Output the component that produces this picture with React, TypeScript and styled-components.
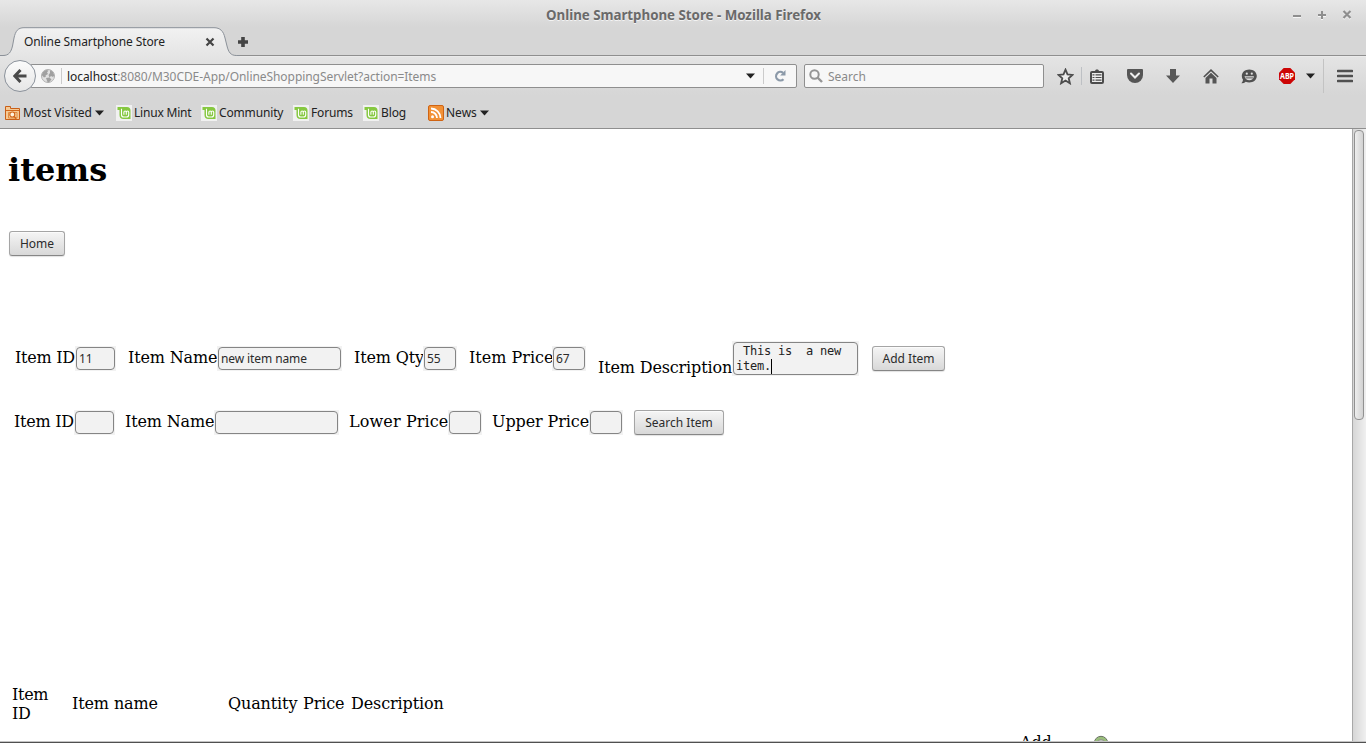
import React from "react";
import styled, { createGlobalStyle } from "styled-components";

const GlobalStyle = createGlobalStyle`
  * { box-sizing: border-box; }
  body { margin: 0; overflow: hidden; background: #fff; }
`;

const Window = styled.div`
  width: 1366px;
  height: 743px;
  display: flex;
  flex-direction: column;
  overflow: hidden;
  background: #fff;
  color: #222;
  font: 12px/16px "Noto Sans", "Open Sans", sans-serif;
  border-bottom: 1px solid #505050;
`;

const TitleBar = styled.div`
  height: 27px;
  flex: none;
  display: grid;
  grid-template-columns: 1fr auto 1fr;
  align-items: center;
  padding: 3px 13px 0 14px;
  background: linear-gradient(#e7e7e7, #d6d6d6);
`;

const WindowTitle = styled.div`
  grid-column: 2;
  font-size: 13.33px;
  font-weight: 700;
  line-height: 18px;
  letter-spacing: -0.02px;
  color: #6a6a6a;
  text-shadow: 0 1px #f3f3f3;
  white-space: nowrap;
`;

const WindowControls = styled.div`
  display: flex;
  justify-content: flex-end;
  gap: 13px;
  margin-top: -2px;
`;

const TabBar = styled.div`
  height: 29px;
  flex: none;
  display: flex;
  background: #d6d6d6;
  border-bottom: 1px solid #8f8f8f;
`;

const Tab = styled.div`
  position: relative;
  width: 236px;
  height: 29px;
  display: flex;
  align-items: center;
  justify-content: space-between;
  padding: 0 21px 0 24px;
`;

const TabShape = styled.svg`
  position: absolute;
  left: 0;
  top: 0;
`;

const TabTitle = styled.span`
  position: relative;
  letter-spacing: -0.1px;
  white-space: nowrap;
`;

const TabClose = styled.svg`
  position: relative;
`;

const NewTab = styled.div`
  width: 14px;
  display: flex;
  align-items: center;
  justify-content: center;
  padding-top: 1px;
`;

const NavBar = styled.div`
  height: 39px;
  flex: none;
  display: flex;
  align-items: center;
  padding-left: 4px;
  background: linear-gradient(#e4e4e4, #d6d6d6);
  border-top: 1px solid #eaeaea;
`;

const BackButton = styled.div`
  position: relative;
  z-index: 1;
  width: 32px;
  height: 32px;
  flex: none;
  border: 1px solid #8b929b;
  border-radius: 50%;
  background: linear-gradient(#fbfbfb, #e6e6e6);
  display: flex;
  align-items: center;
  justify-content: center;
`;

const Field = styled.div<{ $width: number }>`
  width: ${(p) => p.$width}px;
  height: 24px;
  flex: none;
  display: flex;
  align-items: center;
  border: 1px solid #8f8f8f;
  border-radius: 2px;
  background: #f7f7f7;
  color: #8a8a8a;
  white-space: nowrap;
`;

const UrlField = styled(Field)`
  margin-left: -6px;
  padding-left: 10px;
`;

const SearchField = styled(Field)`
  margin-left: 7px;
  padding-left: 4px;
  gap: 5px;
`;

const Host = styled.span`
  color: #222;
`;

const Url = styled.span`
  flex: 1;
  padding: 2px 0 0 5px;
  letter-spacing: -0.06px;
`;

const Placeholder = styled.span`
  padding-top: 2px;
`;

const Divider = styled.div<{ $height: number; $color?: string }>`
  width: 1px;
  flex: none;
  height: ${(p) => p.$height}px;
  background: ${(p) => p.$color ?? "#cbcbcb"};
`;

const Tool = styled.div<{ $width?: number; $left?: number }>`
  width: ${(p) => p.$width ?? 38}px;
  margin-left: ${(p) => p.$left ?? 0}px;
  flex: none;
  height: 24px;
  display: flex;
  align-items: center;
  justify-content: center;
`;

const BookmarksBar = styled.div`
  height: 34px;
  flex: none;
  display: flex;
  align-items: center;
  padding: 2px 4px 0;
  background: #d6d6d6;
  border-bottom: 1px solid #8f8f8f;
`;

const Bookmark = styled.div<{ $width: number; $tracking?: number }>`
  width: ${(p) => p.$width}px;
  height: 16px;
  flex: none;
  display: flex;
  align-items: center;
  letter-spacing: ${(p) => p.$tracking ?? 0}px;
  white-space: nowrap;
  > svg:first-child { margin-right: 2px; flex: none; }
  > svg:last-child:not(:first-child) { margin-left: 3px; flex: none; }
`;

const Viewport = styled.div`
  flex: 1;
  min-height: 0;
  display: flex;
  border-bottom: 1px solid #c4c4c4;
`;

const Page = styled.main`
  flex: 1;
  min-width: 0;
  overflow: hidden;
  color: #000;
  font: 16px/19px "DejaVu Serif", serif;
`;

const Heading = styled.h1`
  margin: 22px 0 0 8px;
  font-size: 32px;
  line-height: 38px;
  font-weight: 700;
`;

const Button = styled.button<{ $width: number }>`
  width: ${(p) => p.$width}px;
  height: 25px;
  flex: none;
  padding: 0;
  border: 1px solid #a5a5a5;
  border-bottom-color: #868686;
  border-radius: 3px;
  background: linear-gradient(#f5f5f5, #d8d8d8);
  box-shadow: 0 1px 1px #e2e2e2, inset 0 1px #fbfbfb;
  color: #2b2b2b;
  font: 12px/16px "Noto Sans", "Open Sans", sans-serif;
  white-space: nowrap;
`;

const HomeForm = styled.form`
  margin: 42px 0 0 9px;
`;

const FormRow = styled.form<{ $top: number; $left: number; $gap: number }>`
  margin: ${(p) => p.$top}px 0 0 ${(p) => p.$left}px;
  height: 37px;
  display: flex;
  align-items: center;
  gap: ${(p) => p.$gap}px;
  > button { margin-left: 1px; }
`;

const FieldGroup = styled.label<{ $labelWidth: number; $drop?: boolean; $tracking?: number }>`
  display: grid;
  grid-template-columns: ${(p) => p.$labelWidth}px auto;
  align-items: center;
  white-space: nowrap;
  > span:first-child {
    letter-spacing: ${(p) => p.$tracking ?? -0.15}px;
    padding-top: ${(p) => (p.$drop ? 18 : 0)}px;
    padding-bottom: ${(p) => (p.$drop ? 0 : 2)}px;
  }
`;

const InputFrame = styled.span`
  display: flex;
  padding: 1px;
  background: #f2f2f2;
`;

const TextInput = styled.input<{ $width: number }>`
  width: ${(p) => p.$width}px;
  height: 23px;
  padding: 0 2px;
  border: 1px solid #858585;
  border-radius: 4px;
  outline: none;
  background: #f2f2f2;
  color: #2b2b2b;
  font: 12px/16px "Noto Sans", "Open Sans", sans-serif;
  letter-spacing: -0.1px;
`;

const DescriptionBox = styled.div`
  width: 125px;
  height: 33px;
  padding: 1px 2px 0;
  border: 1px solid #858585;
  border-radius: 4px;
  background: #f2f2f2;
  color: #222;
  font: 12px/15px "DejaVu Sans Mono", monospace;
  letter-spacing: -0.22px;
  white-space: pre;
`;

const Caret = styled.span`
  display: inline-block;
  width: 1px;
  height: 15px;
  vertical-align: top;
  background: #000;
`;

const Table = styled.div`
  margin: 244px 0 0 12px;
  display: grid;
  grid-template-columns: 60px 156px 75px 48px 669px 73px 20px;
  grid-template-rows: 38px auto;
  row-gap: 9px;
  align-items: center;
  letter-spacing: -0.12px;
  white-space: nowrap;
`;

const NarrowCell = styled.div`
  width: 40px;
  letter-spacing: -0.3px;
  white-space: normal;
`;

const HeaderCell = styled.div`
  padding-bottom: 1px;
`;

const ActionCell = styled.div<{ $column: number; $top?: number }>`
  grid-column: ${(p) => p.$column};
  grid-row: 2;
  align-self: start;
  padding-top: ${(p) => p.$top ?? 0}px;
`;

const ScrollTrack = styled.div`
  width: 14px;
  flex: none;
  padding: 1px 2px 0 1px;
  border-left: 1px solid #a8a8a8;
  background: linear-gradient(90deg, #d6d6d6, #f0f0f0);
`;

const ScrollThumb = styled.div`
  width: 10px;
  height: 290px;
  border: 1px solid #929292;
  border-radius: 4px;
  background: linear-gradient(90deg, #eeeeee, #d2d2d2);
`;

const DownTriangle = () => (
  <svg width="9" height="6" viewBox="0 0 9 6">
    <path d="M0 .5h9L4.500 5.500z" fill="#222" />
  </svg>
);

const MintIcon = () => (
  <svg width="16" height="16" viewBox="0 0 16 16">
    <rect width="16" height="16" fill="#f1f1f1" />
    <path d="M1.500 2h9.500A3.500 3.500 0 0 1 14.500 5.500V14H7.500A4 4 0 0 1 3.500 10V5H1.500z" fill="#86c840" />
    <path d="M5.500 3.800v5.900q0 2.300 2.300 2.300h2.600q2.300 0 2.300-2.300V7.200q0-1.200-1.200-1.200T10.300 7.200V9.700M10.300 7.200Q10.300 6 9.100 6T7.900 7.200V9.700" fill="none" stroke="#fff" strokeWidth="1.1" />
  </svg>
);

const FolderIcon = () => (
  <svg width="16" height="16" viewBox="0 0 16 16">
    <path d="M1.500 14.500V1.500H6.500V3.500H15.500V14.500z" fill="#f5c995" stroke="#c95f17" />
    <path d="M2 5.500H15" stroke="#d1671b" />
    <path d="M4.500 13V7.500H13V13z" fill="#f5cf9c" stroke="#e08c42" />
    <circle cx="8.300" cy="9.500" r="2.500" fill="#fff3df" stroke="#d1671b" strokeWidth="1.200" />
    <path d="M10 11.300L12.200 13.700" stroke="#d1671b" strokeWidth="1.400" />
  </svg>
);

const FeedIcon = () => (
  <svg width="16" height="16" viewBox="0 0 16 16">
    <rect x=".5" y=".5" width="15" height="15" rx="1.500" fill="#f29136" stroke="#cf6414" />
    <circle cx="4.500" cy="11.700" r="1.500" fill="#fff" />
    <path d="M3 7A6 6 0 0 1 9 13M3 3.500A9.500 9.500 0 0 1 12.500 13" fill="none" stroke="#fff" strokeWidth="1.800" />
  </svg>
);

const BackArrow = () => (
  <svg width="14" height="14" viewBox="0 0 14 14">
    <path d="M7.500 1L1.800 7l5.700 6M2.500 7H13.500" fill="none" stroke="#4a4a4a" strokeWidth="3" />
  </svg>
);

const GlobeIcon = () => (
  <svg width="14" height="14" viewBox="0 0 14 14">
    <circle cx="7" cy="7" r="6.500" fill="#e0e0e0" stroke="#b0b0b0" />
    <path d="M.7 6L2 3 5 1 7.500 1.500 6 3.500 7 5 4.500 6.500 5 7.500 3 8.500zM9 1L12 3 13.300 6.500 12 8 10 7 8.500 8.500 7.500 6 9 4zM5 9L8.500 8.500 10.500 10.500 8 13.300 6.500 13z" fill="#a0a0a0" />
  </svg>
);

const App = () => (
  <>
    <GlobalStyle />
    <Window>
      <TitleBar>
        <WindowTitle>Online Smartphone Store - Mozilla Firefox</WindowTitle>
        <WindowControls>
          <svg width="12" height="12" viewBox="0 0 12 12"><path d="M2 9h8" stroke="#f6f6f6" strokeWidth="2" /><path d="M2 8h8" stroke="#8e8e8e" strokeWidth="2" /></svg>
          <svg width="12" height="12" viewBox="0 0 12 12"><path d="M2 8h8M6 4v8" stroke="#f6f6f6" strokeWidth="2" /><path d="M2 7h8M6 3v8" stroke="#8e8e8e" strokeWidth="2" /></svg>
          <svg width="12" height="12" viewBox="0 0 12 12"><path d="M2.500 4l7 7m0-7l-7 7" stroke="#f6f6f6" strokeWidth="2" /><path d="M2.500 3l7 7m0-7l-7 7" stroke="#8e8e8e" strokeWidth="2.200" /></svg>
        </WindowControls>
      </TitleBar>

      <TabBar>
        <Tab>
          <TabShape width="240" height="30" viewBox="0 0 240 30">
            <defs>
              <linearGradient id="tabFill" x1="0" y1="0" x2="0" y2="1">
                <stop offset="0" stopColor="#f2f2f2" />
                <stop offset="1" stopColor="#e4e4e4" />
              </linearGradient>
            </defs>
            <path d="M0 30V28.500H3C9 28.500 11 25 12.500 19L14 11C15.500 4 18 .7 24 .7H214C220 .7 223.500 4 225 11L227 19C228.500 25 230.500 28.500 236.500 28.500H240V30z" fill="url(#tabFill)" />
            <path d="M0 28.500H3C9 28.500 11 25 12.500 19L14 11C15.500 4 18 .7 24 .7H214C220 .7 223.500 4 225 11L227 19C228.500 25 230.500 28.500 236.500 28.500H240" fill="none" stroke="#8b9199" />
          </TabShape>
          <TabTitle>Online Smartphone Store</TabTitle>
          <TabClose width="10" height="10" viewBox="0 0 10 10"><path d="M1.500 1.500l7 7m0-7l-7 7" stroke="#444" strokeWidth="2.200" /></TabClose>
        </Tab>
        <NewTab>
          <svg width="12" height="12" viewBox="0 0 12 12"><path d="M1 6h10M6 1v10" stroke="#444" strokeWidth="3.600" /></svg>
        </NewTab>
      </TabBar>

      <NavBar>
        <BackButton><BackArrow /></BackButton>
        <UrlField $width={767}>
          <GlobeIcon />
          <Tool $width={6} />
          <Divider $height={16} />
          <Url><Host>localhost</Host>:8080/M30CDE-App/OnlineShoppingServlet?action=Items</Url>
          <DownTriangle />
          <Tool $width={8} />
          <Divider $height={16} />
          <Tool $width={32}>
            <svg width="12" height="12" viewBox="0 0 12 12">
              <path d="M9.500 9.200A4.300 4.300 0 1 1 9 2.800" fill="none" stroke="#8b99a8" strokeWidth="2.200" />
              <path d="M11.500 0V5.500H6.200z" fill="#8b99a8" />
            </svg>
          </Tool>
        </UrlField>
        <SearchField $width={240}>
          <svg width="14" height="14" viewBox="0 0 14 14">
            <circle cx="5.500" cy="5.500" r="4.200" fill="none" stroke="#959595" strokeWidth="2" />
            <path d="M8.500 8.500L13 13" stroke="#959595" strokeWidth="2.400" />
          </svg>
          <Placeholder>Search</Placeholder>
        </SearchField>
        <Tool $width={31} $left={6}>
          <svg width="17" height="17" viewBox="0 0 17 17"><path d="M8.500 1.700l2 4.700 5 .5-3.800 3.400 1.200 5-4.400-2.700-4.400 2.700 1.200-5L1.500 6.900l5-.5z" fill="#ececec" stroke="#4c4c4c" strokeWidth="1.800" /></svg>
        </Tool>
        <Divider $height={18} $color="#bdc0c4" />
        <Tool $width={30}>
          <svg width="14" height="15" viewBox="0 0 14 15">
            <path d="M4.500 2.500L6 .5H8L9.500 2.500" fill="#4c4c4c" />
            <rect x="1" y="3" width="12" height="11" rx="1" fill="#ededed" stroke="#4c4c4c" strokeWidth="2" />
            <path d="M2.500 5.800h2M2.500 8.500h2M2.500 11.200h2M5.500 5.800h6M5.500 8.500h6M5.500 11.200h6" stroke="#4c4c4c" strokeWidth="1.200" />
          </svg>
        </Tool>
        <Tool $left={4}>
          <svg width="16" height="14" viewBox="0 0 16 14">
            <path d="M1 0H15Q16 0 16 1V6A8 8 0 0 1 0 6V1Q0 0 1 0z" fill="#555" />
            <path d="M4 4.500l4 4 4-4" fill="none" stroke="#eee" strokeWidth="2" strokeLinecap="round" />
          </svg>
        </Tool>
        <Tool>
          <svg width="14" height="14" viewBox="0 0 14 14"><path d="M4 0H10V6.500H14L7 14 0 6.500H4z" fill="#585858" /></svg>
        </Tool>
        <Tool>
          <svg width="16" height="15" viewBox="0 0 16 15">
            <path d="M.8 8L8 1.200 15.200 8" fill="none" stroke="#505050" strokeWidth="1.600" />
            <path d="M2.500 9L8 3.800 13.500 9V14.500H9.500V9.500H6.500V14.500H2.500z" fill="#555" />
          </svg>
        </Tool>
        <Tool>
          <svg width="16" height="15" viewBox="0 0 16 15">
            <path d="M8.300.5C12.500.5 15.800 3.300 15.800 7S12.500 13.500 8.300 13.500C7 13.500 5.800 13.300 4.700 12.700Q3 14.400.4 14.200 2 12.800 2 10.800A6.300 6.300 0 0 1 .8 7C.8 3.300 4 .5 8.300.5z" fill="#505050" />
            <circle cx="5.800" cy="4.700" r="1.100" fill="#dedede" /><circle cx="10.800" cy="4.700" r="1.100" fill="#dedede" />
            <path d="M3.500 7.300H13Q12 11.300 8.300 11.300T3.500 7.300z" fill="#dedede" />
            <path d="M4.500 8.900H12" stroke="#505050" strokeWidth=".9" />
          </svg>
        </Tool>
        <Tool>
          <svg width="16" height="16" viewBox="0 0 16 16" overflow="visible">
            <path d="M4.700 0H11.300L16 4.700V11.300L11.300 16H4.700L0 11.300V4.700z" fill="#cc0505" />
            <text x="8" y="10.800" textAnchor="middle" textLength="14" lengthAdjust="spacingAndGlyphs" fill="#fff" fontFamily="Noto Sans" fontWeight="700" fontSize="8">ABP</text>
          </svg>
        </Tool>
        <Tool $width={9}><DownTriangle /></Tool>
        <Tool $width={8} />
        <Divider $height={34} $color="#c3c3c3" />
        <Tool $width={42}>
          <svg width="16" height="14" viewBox="0 0 16 14"><path d="M1 2H15M1 7H15M1 12H15" stroke="#505050" strokeWidth="2.600" strokeLinecap="round" /></svg>
        </Tool>
      </NavBar>

      <BookmarksBar>
        <Bookmark $width={112}><FolderIcon /><Tool $width={1} /><span>Most Visited</span><DownTriangle /></Bookmark>
        <Bookmark $width={85} $tracking={-0.2}><MintIcon /><span>Linux Mint</span></Bookmark>
        <Bookmark $width={92} $tracking={-0.15}><MintIcon /><span>Community</span></Bookmark>
        <Bookmark $width={70} $tracking={-0.15}><MintIcon /><span>Forums</span></Bookmark>
        <Bookmark $width={65} $tracking={-0.1}><MintIcon /><span>Blog</span></Bookmark>
        <Bookmark $width={70}><FeedIcon /><span>News</span><DownTriangle /></Bookmark>
      </BookmarksBar>

      <Viewport>
        <Page>
          <Heading>items</Heading>
          <HomeForm><Button type="button" $width={56}>Home</Button></HomeForm>

          <FormRow $top={84} $left={15} $gap={12}>
            <FieldGroup $labelWidth={60} $tracking={-0.25}><span>Item ID</span><InputFrame><TextInput $width={39} defaultValue="11" /></InputFrame></FieldGroup>
            <FieldGroup $labelWidth={89}><span>Item Name</span><InputFrame><TextInput $width={123} defaultValue="new item name" /></InputFrame></FieldGroup>
            <FieldGroup $labelWidth={69}><span>Item Qty</span><InputFrame><TextInput $width={32} defaultValue="55" /></InputFrame></FieldGroup>
            <FieldGroup $labelWidth={83} $tracking={0}><span>Item Price</span><InputFrame><TextInput $width={32} defaultValue="67" /></InputFrame></FieldGroup>
            <FieldGroup $labelWidth={134} $drop><span>Item Description</span><InputFrame><DescriptionBox>{" This is  a new\nitem."}<Caret /></DescriptionBox></InputFrame></FieldGroup>
            <Button type="button" $width={73}>Add Item</Button>
          </FormRow>

          <FormRow $top={27} $left={14} $gap={10}>
            <FieldGroup $labelWidth={60} $tracking={-0.25}><span>Item ID</span><InputFrame><TextInput $width={39} /></InputFrame></FieldGroup>
            <FieldGroup $labelWidth={89}><span>Item Name</span><InputFrame><TextInput $width={123} /></InputFrame></FieldGroup>
            <FieldGroup $labelWidth={99} $tracking={0.12}><span>Lower Price</span><InputFrame><TextInput $width={32} /></InputFrame></FieldGroup>
            <FieldGroup $labelWidth={97} $tracking={-0.1}><span>Upper Price</span><InputFrame><TextInput $width={32} /></InputFrame></FieldGroup>
            <Button type="button" $width={90}>Search Item</Button>
          </FormRow>

          <Table>
            <NarrowCell>Item ID</NarrowCell>
            <HeaderCell>Item name</HeaderCell>
            <HeaderCell>Quantity</HeaderCell>
            <HeaderCell>Price</HeaderCell>
            <HeaderCell>Description</HeaderCell>
            <ActionCell $column={6} $top={1}>Add</ActionCell>
            <ActionCell $column={7} $top={3}>
              <svg width="16" height="16" viewBox="0 0 16 16">
                <circle cx="8" cy="8" r="5" fill="none" stroke="#9abf7b" strokeWidth="3" />
                <circle cx="8" cy="8" r="6.700" fill="none" stroke="#66705f" />
                <circle cx="8" cy="8" r="3.500" fill="#c7c7c7" stroke="#66705f" strokeWidth=".6" />
              </svg>
            </ActionCell>
          </Table>
        </Page>
        <ScrollTrack><ScrollThumb /></ScrollTrack>
      </Viewport>
    </Window>
  </>
);

export default App;
